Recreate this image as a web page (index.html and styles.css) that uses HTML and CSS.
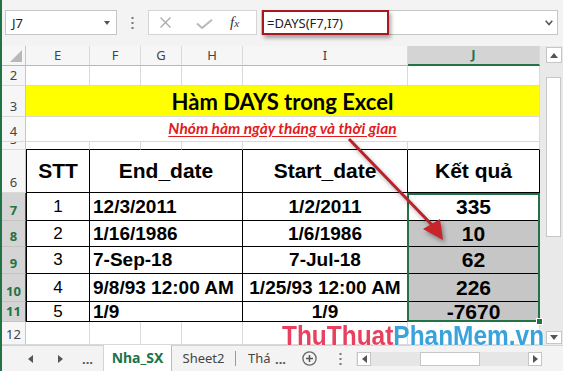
FILE: index.html
```html
<!DOCTYPE html>
<html>
<head>
<meta charset="utf-8">
<title>Hàm DAYS trong Excel</title>
<link rel="stylesheet" href="styles.css">
</head>
<body>
<div class="app">
  <div class="toolbar">
    <div class="namebox"><span>J7</span><span class="dd"></span></div>
    <div class="vdots"><svg width="3" height="12" viewBox="0 0 3 12"><rect x="0.5" y="0" width="2" height="2" fill="#777"/><rect x="0.5" y="5" width="2" height="2" fill="#777"/><rect x="0.5" y="10" width="2" height="2" fill="#777"/></svg></div>
    <div class="fxbox">
      <svg class="ic-x" width="11" height="11" viewBox="0 0 11 11"><path d="M0.5 0.5 L10.5 10.5 M10.5 0.5 L0.5 10.5" stroke="#a9a9a9" stroke-width="1.3" fill="none"/></svg>
      <svg class="ic-ok" width="17" height="10" viewBox="0 0 17 10"><path d="M1 4.5 L6 9 L16 0.8" stroke="#b9b9b9" stroke-width="2" fill="none"/></svg>
      <span class="fx">f<span class="fxx">x</span></span>
    </div>
    <div class="formula">
      <span class="fhl">=DAYS(F7,I7)</span>
      <svg class="chev" width="8" height="6" viewBox="0 0 8 6"><path d="M0.7 0.8 L4 4.5 L7.3 0.8" stroke="#555" stroke-width="1.5" fill="none"/></svg>
    </div>
  </div>

  <div class="main">
    <div class="sheet">
      <div class="c ch corner"><svg width="12" height="12" viewBox="0 0 12 12"><path d="M12 0 L12 12 L0 12 Z" fill="#b8b8b8"/></svg></div>
      <div class="c ch">E</div>
      <div class="c ch">F</div>
      <div class="c ch">G</div>
      <div class="c ch">H</div>
      <div class="c ch">I</div>
      <div class="c ch chsel">J</div>

      <div class="c rh">2</div>
      <div class="c"></div><div class="c"></div><div class="c"></div><div class="c"></div><div class="c"></div><div class="c"></div>

      <div class="c rh">3</div>
      <div class="c title">Hàm DAYS trong Excel</div>

      <div class="c rh">4</div>
      <div class="c sub"><span>Nhóm hàm ngày tháng và thời gian</span></div>

      <div class="c rh">5</div>
      <div class="c tt"></div><div class="c tt"></div><div class="c tt"></div><div class="c tt"></div><div class="c tt"></div><div class="c tt"></div>

      <div class="c rh">6</div>
      <div class="c t tl hd">STT</div>
      <div class="c t hd span3">End_date</div>
      <div class="c t hd">Start_date</div>
      <div class="c t hd">Kết quả</div>

      <div class="c rh rsel">7</div>
      <div class="c t tl num">1</div>
      <div class="c t d1 span3">12/3/2011</div>
      <div class="c t d2">1/2/2011</div>
      <div class="c t res r7">335</div>

      <div class="c rh rsel">8</div>
      <div class="c t tl num">2</div>
      <div class="c t d1 span3">1/16/1986</div>
      <div class="c t d2">1/6/1986</div>
      <div class="c t res shade r8">10</div>

      <div class="c rh rsel">9</div>
      <div class="c t tl num">3</div>
      <div class="c t d1 span3">7-Sep-18</div>
      <div class="c t d2">7-Jul-18</div>
      <div class="c t res shade r9">62</div>

      <div class="c rh rsel">10</div>
      <div class="c t tl num">4</div>
      <div class="c t d1 span3">9/8/93 12:00 AM</div>
      <div class="c t d2">1/25/93 12:00 AM</div>
      <div class="c t res shade r10">226</div>

      <div class="c rh rsel">11</div>
      <div class="c t tl num">5</div>
      <div class="c t d1 span3">1/9</div>
      <div class="c t d2">1/9</div>
      <div class="c t res shade r11">-7670</div>

      <div class="c rh">12</div>
      <div class="c"></div><div class="c"></div><div class="c"></div><div class="c"></div><div class="c"></div><div class="c"></div>

      <div class="selbox"></div>
    </div>
    <div class="vscroll">
      <div class="vbtn"><svg width="8" height="5" viewBox="0 0 8 5"><path d="M0 5 L4 0 L8 5 Z" fill="#555"/></svg></div>
      <div class="vthumb"></div>
      <div class="vbtn vdown"><svg width="8" height="5" viewBox="0 0 8 5"><path d="M0 0 L8 0 L4 5 Z" fill="#555"/></svg></div>
    </div>
  </div>

  <div class="tabbar">
    <svg class="nav-l" width="5" height="8" viewBox="0 0 5 8"><path d="M5 0 L5 8 L0 4 Z" fill="#555"/></svg>
    <svg class="nav-r" width="5" height="8" viewBox="0 0 5 8"><path d="M0 0 L0 8 L5 4 Z" fill="#555"/></svg>
    <span class="more">...</span>
    <div class="tab active">Nha_SX</div>
    <div class="tab t2">Sheet2</div>
    <span class="sep"></span>
    <div class="tab t3">Thá</div>
    <span class="more2">...</span>
    <svg class="plus" width="15" height="15" viewBox="0 0 15 15"><circle cx="7.5" cy="7.5" r="6.6" stroke="#666" stroke-width="1.3" fill="none"/><path d="M7.5 4 V11 M4 7.5 H11" stroke="#555" stroke-width="1.5"/></svg>
    <svg class="tdots" width="3" height="12" viewBox="0 0 3 12"><rect x="0.5" y="0" width="2" height="2" fill="#777"/><rect x="0.5" y="5" width="2" height="2" fill="#777"/><rect x="0.5" y="10" width="2" height="2" fill="#777"/></svg>
    <div class="hscroll">
      <div class="hbtn"><svg width="5" height="8" viewBox="0 0 5 8"><path d="M5 0 L5 8 L0 4 Z" fill="#555"/></svg></div>
      <div class="hthumb"></div>
      <div class="hbtn hright"><svg width="5" height="8" viewBox="0 0 5 8"><path d="M0 0 L0 8 L5 4 Z" fill="#555"/></svg></div>
    </div>
  </div>

  <svg class="arrow" width="563" height="371" viewBox="0 0 563 371">
    <line x1="349" y1="139" x2="433" y2="226" stroke="#b8232a" stroke-width="3"/>
    <polygon points="423,229 440,219 443,240" fill="#c8242b"/>
  </svg>

  <div class="wm"><span class="wm-r">ThuThuat</span><span class="wm-b">PhanMem.vn</span></div>
</div>
</body>
</html>
```

FILE: styles.css
```css
* {
  box-sizing: border-box;
  margin: 0;
  padding: 0;
}

body {
  margin: 0;
  width: 563px;
  height: 371px;
  overflow: hidden;
  background: #ffffff;
  font-family: "Noto Sans", "Liberation Sans", sans-serif;
}

.app {
  position: relative;
  width: 563px;
  height: 371px;
  border-left: 2px solid #217346;
  display: flex;
  flex-direction: column;
  background: #f3f3f3;
}

/* ---------- formula bar ---------- */
.toolbar {
  height: 46px;
  flex: none;
  display: flex;
  align-items: flex-start;
  padding: 10px 0 0 3px;
}

.namebox {
  width: 112px;
  height: 25px;
  background: #fff;
  border: 1px solid #c6c6c6;
  display: flex;
  align-items: center;
  justify-content: space-between;
  padding: 0 6px 0 6px;
  font-size: 13px;
  color: #222;
}

.dd {
  width: 0;
  height: 0;
  border-left: 3.5px solid transparent;
  border-right: 3.5px solid transparent;
  border-top: 4px solid #555;
}

.vdots {
  width: 31px;
  height: 25px;
  display: flex;
  align-items: center;
  justify-content: center;
}

.fxbox {
  width: 109px;
  height: 25px;
  background: #fff;
  border: 1px solid #d4d4d4;
  display: flex;
  align-items: center;
}

.ic-x {
  margin-left: 11px;
}

.ic-ok {
  margin-left: 25px;
  margin-top: 2px;
}

.fx {
  margin-left: 17px;
  font-family: "Liberation Serif", serif;
  font-style: italic;
  font-size: 15px;
  color: #333;
}

.fxx {
  font-size: 11px;
}

.formula {
  margin-left: 4px;
  width: 297px;
  height: 25px;
  background: #fff;
  border: 1px solid #c6c6c6;
  display: flex;
  align-items: stretch;
  justify-content: space-between;
}

.fhl {
  width: 127px;
  margin: -1px 0 -1px 0;
  border: 2px solid #a8181f;
  box-shadow: 2px 3px 4px rgba(0, 0, 0, 0.35);
  display: flex;
  align-items: center;
  padding-left: 3px;
  font-size: 13px;
  color: #222;
}

.chev {
  align-self: center;
  margin-right: 4px;
}

/* ---------- sheet ---------- */
.main {
  flex: none;
  height: 299px;
  display: flex;
}

.sheet {
  width: 538px;
  display: grid;
  grid-template-columns: 24px 64px 51px 41px 61px 165px 132px;
  grid-template-rows: 20px 20px 31px 25px 8px 43px 28px 26px 27px 28px 20px 23px;
  background: #fff;
}

.c {
  border-right: 1px solid #d9d9d9;
  border-bottom: 1px solid #d9d9d9;
  display: flex;
  align-items: center;
  justify-content: center;
  overflow: hidden;
  white-space: nowrap;
  font-family: "Liberation Sans", Arial, sans-serif;
  color: #000;
  background: #fff;
}

.ch {
  background: #f6f6f6;
  border-right: 1px solid #dadada;
  border-bottom: 1px solid #b7b7b7;
  font-family: "Noto Sans", sans-serif;
  font-size: 13px;
  color: #444;
  padding-bottom: 2px;
}

.corner {
  justify-content: flex-end;
  align-items: flex-end;
  padding: 0 3px 3px 0;
  border-right-color: #c6c6c6;
}

.chsel {
  background: #d4d4d4;
  color: #217346;
  font-weight: bold;
  border-bottom: 2px solid #217346;
}

.rh {
  background: #f6f6f6;
  border-right: 1px solid #c6c6c6;
  border-bottom: 1px solid #dadada;
  font-family: "Noto Sans", sans-serif;
  font-size: 13px;
  line-height: 16px;
  color: #444;
  align-items: flex-end;
  padding-bottom: 2px;
}

.rsel {
  background: #d4d4d4;
  color: #217346;
  font-weight: bold;
  border-right: 1px solid #217346;
  border-bottom-color: #c4c4c4;
}

.title {
  grid-column: span 6;
  background: #ffff00;
  font-family: "Lato", "Liberation Sans", sans-serif;
  font-weight: bold;
  font-size: 22px;
  padding-top: 1px;
}

.sub {
  grid-column: span 6;
  font-family: "Lato", "Liberation Sans", sans-serif;
  font-weight: bold;
  font-style: italic;
  font-size: 15.5px;
  color: #e41b1b;
  padding-bottom: 3px;
}

.sub span {
  text-decoration: underline;
  text-underline-offset: 2px;
}

.tt {
  border-bottom-color: #000;
}

.t {
  border-right-color: #000;
  border-bottom-color: #000;
}

.tl {
  border-left: 1px solid #000;
}

.span3 {
  grid-column: span 3;
}

.hd {
  font-weight: bold;
  font-size: 21px;
}

.num {
  font-size: 17px;
}

.d1 {
  justify-content: flex-start;
  padding-left: 3px;
  font-weight: bold;
  font-size: 19px;
}

.d2 {
  font-weight: bold;
  font-size: 19px;
}

.res {
  grid-column: 7;
  font-weight: bold;
  font-size: 21px;
}

.r7 { grid-row: 7; }
.r8 { grid-row: 8; }
.r9 { grid-row: 9; }
.r10 { grid-row: 10; }
.r11 { grid-row: 11; }

.shade {
  background: #c6c6c6;
}

.selbox {
  grid-column: 7;
  grid-row: 7 / 12;
  border: 2px solid #217346;
  margin-left: -1px;
  position: relative;
}

.selbox::after {
  content: "";
  position: absolute;
  right: -4px;
  bottom: -4px;
  width: 5px;
  height: 5px;
  background: #217346;
  box-shadow: 0 0 0 1px #fff;
}

/* ---------- vertical scrollbar ---------- */
.vscroll {
  width: 23px;
  background: #e9e9e9;
  padding: 1px 1px 1px 6px;
  display: flex;
  flex-direction: column;
}

.vbtn {
  width: 16px;
  height: 16px;
  background: #fff;
  border: 1px solid #c6c6c6;
  display: flex;
  align-items: center;
  justify-content: center;
}

.vthumb {
  margin-top: 14px;
  width: 15px;
  height: 160px;
  background: #fff;
  border: 1px solid #c6c6c6;
}

.vdown {
  margin-top: auto;
  height: 13px;
}

/* ---------- sheet tabs ---------- */
.tabbar {
  flex: 1;
  display: flex;
  align-items: center;
  background: #f3f3f3;
  border-top: 1px solid #d4d4d4;
  padding-left: 26px;
  font-size: 13px;
  color: #444;
}

.nav-r {
  margin-left: 25px;
}

.more {
  margin-left: 19px;
  width: 12px;
  font-weight: bold;
  color: #555;
  line-height: 10px;
}

.tab {
  height: 100%;
  display: flex;
  align-items: center;
  justify-content: center;
  white-space: nowrap;
}

.active {
  margin-left: 9px;
  width: 69px;
  margin-top: -1px;
  height: calc(100% + 1px);
  background: #fff;
  color: #217346;
  font-weight: bold;
  font-size: 14px;
  border-left: 1px solid #d4d4d4;
  border-right: 1px solid #bdbdbd;
  padding-bottom: 2px;
}

.t2 {
  width: 63px;
  padding-bottom: 2px;
}

.sep {
  width: 1px;
  height: 15px;
  background: #9a9a9a;
}

.t3 {
  width: 39px;
  justify-content: flex-start;
  padding-left: 12px;
  padding-bottom: 2px;
}

.more2 {
  width: 14px;
  font-weight: bold;
  color: #555;
  line-height: 10px;
}

.plus {
  margin-left: 13px;
}

.tdots {
  margin-left: 22px;
}

.hscroll {
  margin-left: 14px;
  width: 186px;
  height: 14px;
  background: #e6e6e6;
  display: flex;
  align-items: stretch;
  padding: 0 0 0 1px;
}

.hbtn {
  width: 14px;
  background: #fff;
  border: 1px solid #c6c6c6;
  display: flex;
  align-items: center;
  justify-content: center;
}

.hthumb {
  margin-left: 49px;
  width: 60px;
  background: #fff;
  border: 1px solid #c6c6c6;
}

.hright {
  margin-left: auto;
}

/* ---------- overlays ---------- */
.arrow {
  position: absolute;
  left: -2px;
  top: 0;
  pointer-events: none;
  filter: drop-shadow(2px 3px 2px rgba(0, 0, 0, 0.35));
}

.wm {
  position: absolute;
  left: 280px;
  top: 322px;
  font-family: "Liberation Sans", Arial, sans-serif;
  font-weight: bold;
  font-size: 28px;
  line-height: 28px;
  white-space: nowrap;
  transform: scaleX(0.873);
  transform-origin: left top;
  text-shadow: 0 0 2px #fff, 0 0 2px #fff;
}

.wm-r {
  color: #e8405f;
}

.wm-b {
  color: #3aa2dc;
}
```
